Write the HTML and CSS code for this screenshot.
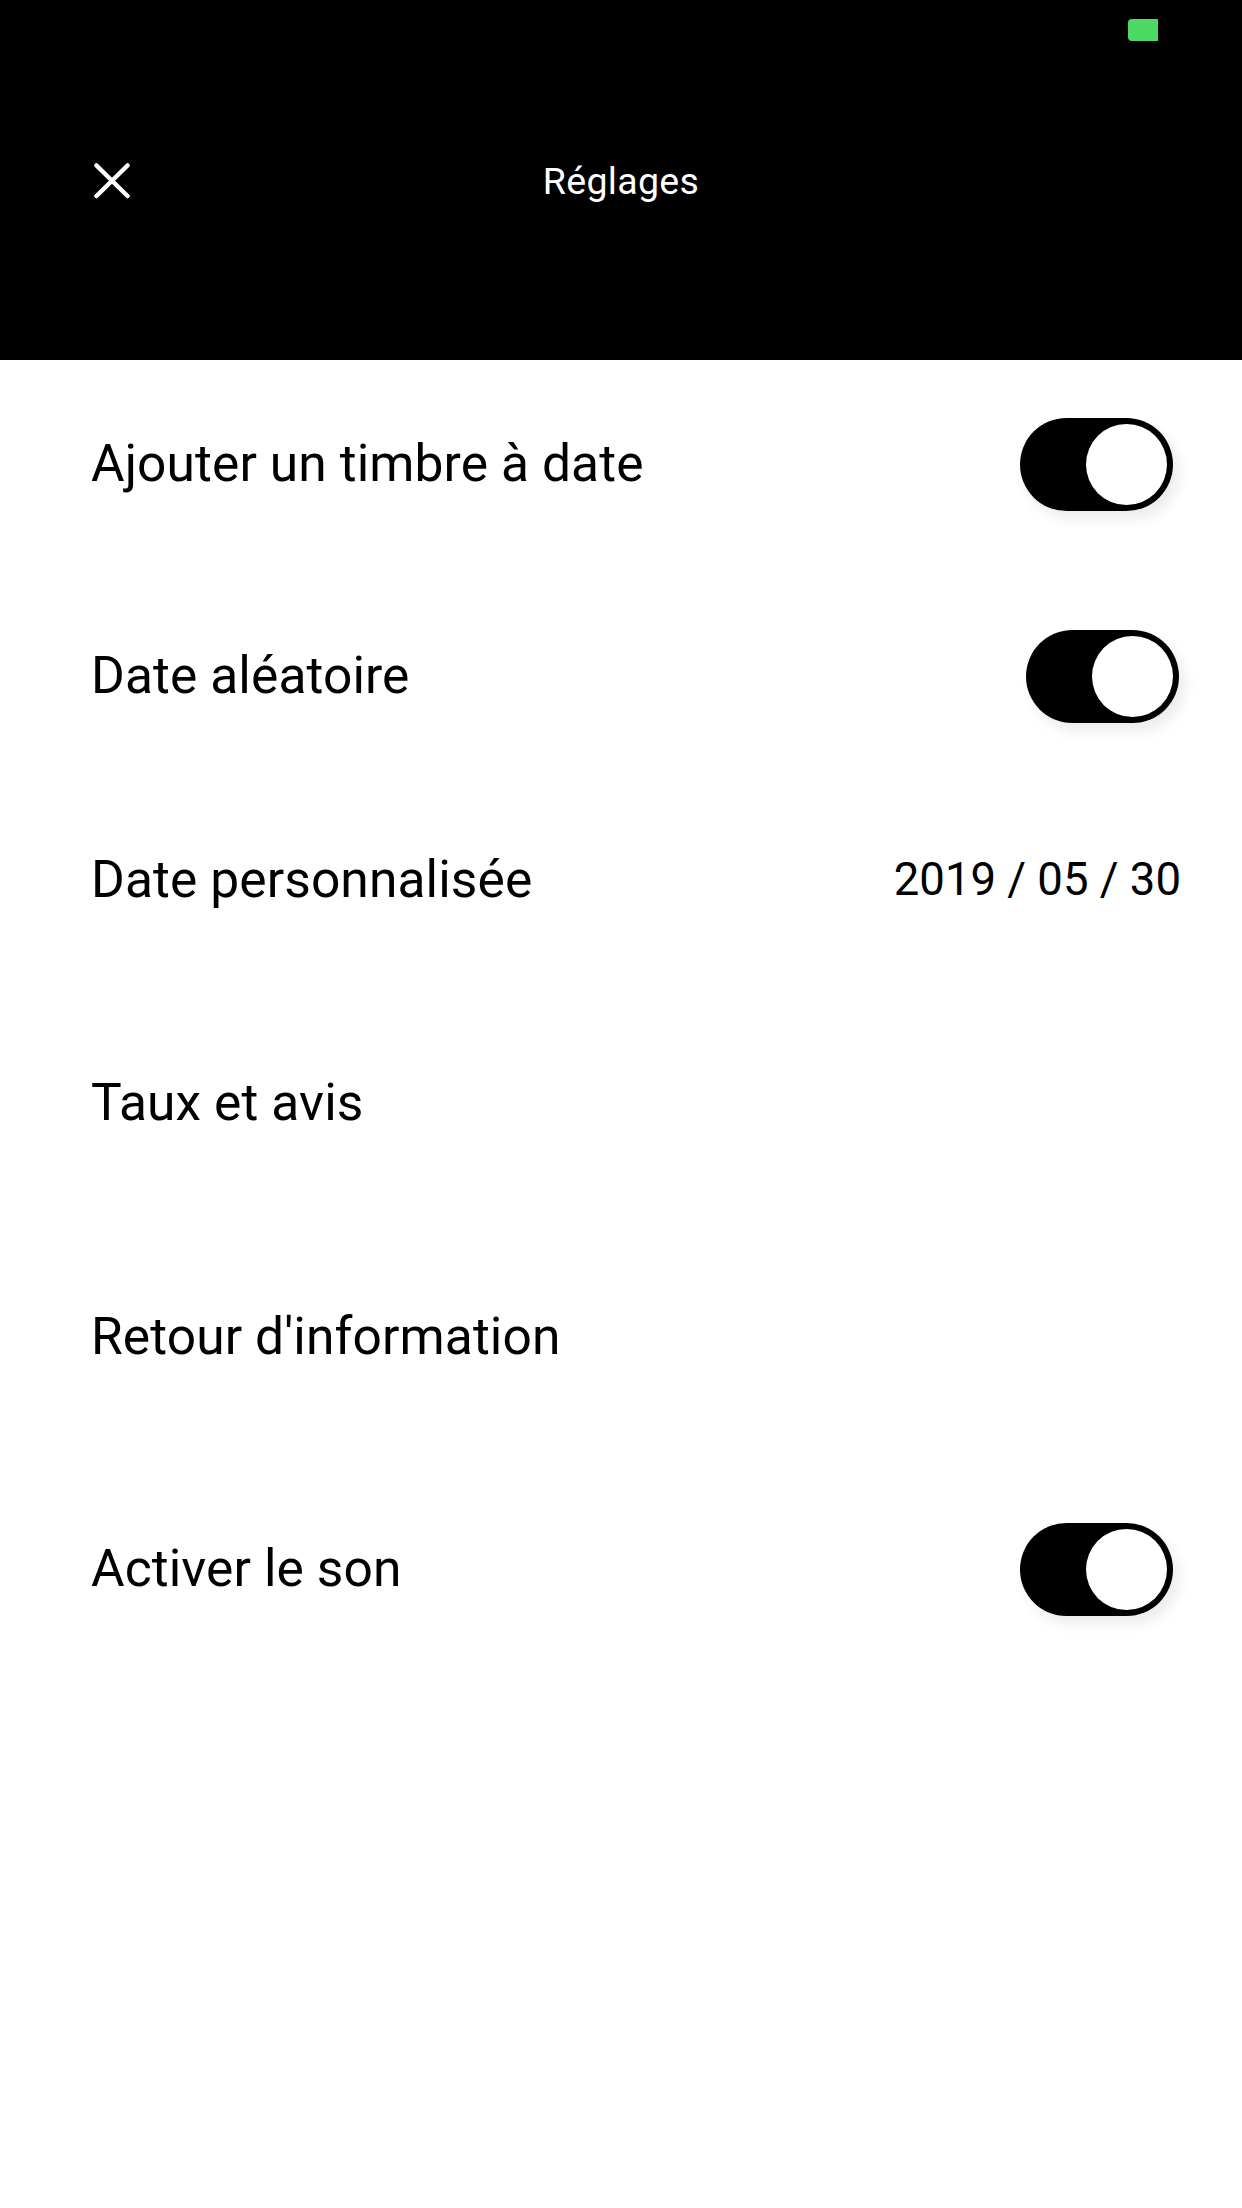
FILE: index.html
```html
<!DOCTYPE html>
<html lang="fr">
<head>
<meta charset="utf-8">
<title>Réglages</title>
<link rel="stylesheet" href="styles.css">
</head>
<body>
<div class="screen">
  <header class="header">
    <div class="status">
      <div class="battery"></div>
    </div>
    <nav class="nav">
      <div class="nav-left">
        <svg class="close" width="36" height="36" viewBox="0 0 36 36" aria-label="Fermer">
          <line x1="2.5" y1="2.5" x2="33.5" y2="33" />
          <line x1="33.5" y1="2.5" x2="2.5" y2="33" />
        </svg>
      </div>
      <div class="title">Réglages</div>
      <div class="nav-right"></div>
    </nav>
  </header>
  <main class="list">
    <div class="row row-1">
      <span class="label">Ajouter un timbre à date</span>
      <div class="toggle"><div class="knob"></div></div>
    </div>
    <div class="row row-2 row-shift">
      <span class="label">Date aléatoire</span>
      <div class="toggle"><div class="knob"></div></div>
    </div>
    <div class="row row-3 row-date">
      <span class="label">Date personnalisée</span>
      <span class="value">2019 / 05 / 30</span>
    </div>
    <div class="row row-4">
      <span class="label">Taux et avis</span>
    </div>
    <div class="row row-5">
      <span class="label">Retour d'information</span>
    </div>
    <div class="row row-6">
      <span class="label">Activer le son</span>
      <div class="toggle"><div class="knob"></div></div>
    </div>
  </main>
</div>
</body>
</html>
```
FILE: styles.css
```css
html, body {
  margin: 0;
  padding: 0;
  background: #ffffff;
}

body {
  font-family: Roboto, "Liberation Sans", sans-serif;
  color: #000000;
}

.screen {
  width: 1242px;
  min-height: 2208px;
  background: #ffffff;
}

.header {
  height: 360px;
  background: #000000;
  box-sizing: border-box;
  padding-top: 19px;
  display: flex;
  flex-direction: column;
}

.status {
  height: 22px;
  display: flex;
  justify-content: flex-end;
  padding-right: 84px;
}

.battery {
  width: 30px;
  height: 22px;
  background: #4cd964;
  border-radius: 4px 0 0 4px;
}

.nav {
  margin-top: 80px;
  height: 120px;
  display: grid;
  grid-template-columns: 1fr auto 1fr;
  align-items: center;
}

.nav-left {
  padding-left: 94px;
  display: flex;
  align-items: center;
}

.close {
  display: block;
}

.close line {
  stroke: #ffffff;
  stroke-width: 4.5;
  stroke-linecap: round;
}

.title {
  color: #ffffff;
  font-size: 37.5px;
  font-weight: 400;
  letter-spacing: 0.3px;
}

.list {
  display: flex;
  flex-direction: column;
}

.row {
  display: flex;
  align-items: center;
  justify-content: space-between;
  padding-left: 91px;
  padding-right: 69px;
  box-sizing: border-box;
}

.row-shift {
  padding-right: 63px;
}

.row-date {
  padding-right: 61px;
}

.row-1 { height: 208px; }
.row-2 { height: 216px; }
.row-3 { height: 192px; }
.row-4 { height: 254px; }
.row-5 { height: 214px; }
.row-6 { height: 250px; }

.label {
  font-size: 51.5px;
  font-weight: 400;
  line-height: 1;
  letter-spacing: 0.1px;
}

.value {
  font-size: 45.5px;
  font-weight: 400;
  line-height: 1;
}

.toggle {
  width: 153px;
  height: 93px;
  border-radius: 47px;
  background: #000000;
  box-sizing: border-box;
  padding: 6px;
  display: flex;
  justify-content: flex-end;
  align-items: center;
  box-shadow: 6px 8px 14px rgba(0, 0, 0, 0.08);
}

.knob {
  width: 81px;
  height: 81px;
  border-radius: 50%;
  background: #ffffff;
}
```
